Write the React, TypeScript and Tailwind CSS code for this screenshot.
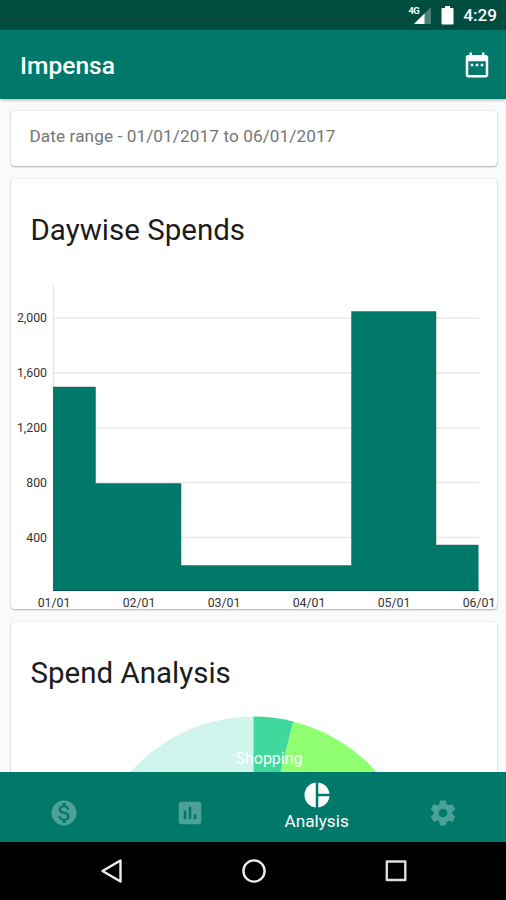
/**
 * Impensa — analysis screen
 *
 * Status bar, app bar, scrolling cards (date range, daywise chart, spend pie),
 * bottom tabs and the Android system navigation.
 */

import type { ReactNode } from "react"

type Tab = {
  id: string
  label: string
  path: string
}

const TABS: Tab[] = [
  {
    id: "spends",
    label: "Spends",
    path: "M12 2C6.48 2 2 6.48 2 12s4.48 10 10 10 10-4.48 10-10S17.52 2 12 2zm1.41 16.09V20h-2.67v-1.93c-1.71-.36-3.16-1.46-3.27-3.4h1.96c.1 1.05.82 1.87 2.65 1.87 1.96 0 2.4-.98 2.4-1.59 0-.83-.44-1.61-2.67-2.14-2.48-.6-4.18-1.62-4.18-3.67 0-1.72 1.39-2.84 3.11-3.21V4h2.67v1.95c1.86.45 2.79 1.86 2.85 3.39H14.3c-.05-1.11-.64-1.87-2.22-1.87-1.5 0-2.4.68-2.4 1.64 0 .84.65 1.39 2.67 1.91s4.18 1.39 4.18 3.91c-.01 1.83-1.38 2.83-3.12 3.16z",
  },
  {
    id: "reports",
    label: "Reports",
    path: "M19 3H5c-1.1 0-2 .9-2 2v14c0 1.1.9 2 2 2h14c1.1 0 2-.9 2-2V5c0-1.1-.9-2-2-2zM9 17H7v-7h2v7zm4 0h-2V7h2v10zm4 0h-2v-4h2v4z",
  },
  {
    id: "analysis",
    label: "Analysis",
    path: "M11 2v20c-5.07-.5-9-4.79-9-10s3.93-9.5 9-10zm2.03 0v8.99H22c-.47-4.74-4.24-8.52-8.97-8.99zm0 11.01V22c4.74-.47 8.5-4.25 8.97-8.99h-8.97z",
  },
  {
    id: "settings",
    label: "Settings",
    path: "M19.43 12.98c.04-.32.07-.64.07-.98s-.03-.66-.07-.98l2.11-1.65c.19-.15.24-.42.12-.64l-2-3.46c-.12-.22-.39-.3-.61-.22l-2.49 1c-.52-.4-1.08-.73-1.69-.98l-.38-2.65C14.46 2.18 14.25 2 14 2h-4c-.25 0-.46.18-.49.42l-.38 2.65c-.61.25-1.17.59-1.69.98l-2.49-1c-.23-.09-.49 0-.61.22l-2 3.46c-.13.22-.07.49.12.64l2.11 1.65c-.04.32-.07.65-.07.98s.03.66.07.98l-2.11 1.65c-.19.15-.24.42-.12.64l2 3.46c.12.22.39.3.61.22l2.49-1c.52.4 1.08.73 1.69.98l.38 2.65c.03.24.24.42.49.42h4c.25 0 .46-.18.49-.42l.38-2.65c.61-.25 1.17-.59 1.69-.98l2.49 1c.23.09.49 0 .61-.22l2-3.46c.12-.22.07-.49-.12-.64l-2.11-1.65zM12 15.5c-1.93 0-3.5-1.57-3.5-3.5s1.57-3.5 3.5-3.5 3.5 1.57 3.5 3.5-1.57 3.5-3.5 3.5z",
  },
]

const Y_TICKS = [
  { label: "2,000", y: 38 },
  { label: "1,600", y: 93 },
  { label: "1,200", y: 148 },
  { label: "800", y: 202.5 },
  { label: "400", y: 257.5 },
]

const X_TICKS = ["01/01", "02/01", "03/01", "04/01", "05/01", "06/01"]

function StatusBar() {
  return (
    <div className="flex h-[30px] shrink-0 items-center justify-end bg-[#004d40] pr-[9px] text-white">
      <svg width="25" height="20" viewBox="0 0 25 20" className="mr-[8px]" aria-hidden="true">
        <path d="M23 2v17H6z" fill="#fff" fillOpacity="0.3" />
        <path d="M16.5 8.5V19H6z" fill="#fff" />
        <text x="0.5" y="9" fontSize="9.5" fontWeight="700" letterSpacing="-0.8" fill="#fff">
          4G
        </text>
      </svg>
      <svg width="13" height="20" viewBox="0 0 13 20" className="mr-[9px]" aria-hidden="true">
        <path d="M4 1h5v2h2.5a1 1 0 0 1 1 1v14.5a1 1 0 0 1-1 1h-10a1 1 0 0 1-1-1V4a1 1 0 0 1 1-1H4z" fill="#fff" />
      </svg>
      <span className="mt-[2px] text-[17.2px] leading-none font-medium">4:29</span>
    </div>
  )
}

function AppBar() {
  return (
    <header className="z-10 flex h-[69px] shrink-0 items-center justify-between bg-[#00796b] pr-[14px] pl-5 text-white shadow-[0_1px_3px_rgba(0,0,0,0.3)]">
      <h1 className="mt-[3px] text-[24.6px] leading-none font-medium">Impensa</h1>
      <svg width="30" height="30" viewBox="0 0 24 24" fill="currentColor" aria-hidden="true">
        <path d="M9 11H7v2h2v-2zm4 0h-2v2h2v-2zm4 0h-2v2h2v-2zm2-7h-1V2h-2v2H8V2H6v2H5c-1.11 0-1.99.9-1.99 2L3 20c0 1.1.89 2 2 2h14c1.1 0 2-.9 2-2V6c0-1.1-.9-2-2-2zm0 16H5V9h14v11z" />
      </svg>
    </header>
  )
}

function Card({ className, children }: { className: string; children: ReactNode }) {
  return (
    <section
      className={`w-[486px] shrink-0 overflow-hidden rounded-[4px] bg-white shadow-[0_1px_2px_rgba(0,0,0,0.28),0_0_2px_rgba(0,0,0,0.12)] ${className}`}
    >
      {children}
    </section>
  )
}

function DaywiseChart() {
  return (
    <svg width="486" height="330" viewBox="11 0 486 330" className="block" aria-label="Daywise spends">
      {Y_TICKS.map((tick) => (
        <g key={tick.label}>
          <path d={`M53 ${tick.y}H479`} stroke="#e8e8e8" strokeWidth="1.5" />
          <text x="47" y={tick.y + 4} fontSize="12.3" textAnchor="end" fill="#333">
            {tick.label}
          </text>
        </g>
      ))}
      <path d="M53.5 5V311" stroke="#e3e3e3" strokeWidth="1.2" />
      <path
        d="M53 311V107H95.500V203.500H181V285.500H351.500V31.500H436V265H478.500V311z"
        fill="#00796b"
      />
      <path
        d="M53 107H95.500V203.500H181V285.500H351.500V31.500H436V265H478.500"
        fill="none"
        stroke="#3b5f58"
        strokeOpacity="0.5"
        strokeWidth="1"
      />
      <path d="M53 310.500H479" stroke="#00594e" strokeWidth="1" />
      {X_TICKS.map((label, i) => (
        <text key={label} x={54 + i * 85} y="327" fontSize="12.3" textAnchor="middle" fill="#333">
          {label}
        </text>
      ))}
    </svg>
  )
}

function SpendPie() {
  return (
    <svg width="486" height="72" viewBox="11 700 486 72" className="block" aria-label="Spend analysis">
      <path d="M253.500 880.500V716.500A164 164 0 0 0 89.500 880.500z" fill="#cff5ec" />
      <path d="M253.500 880.500L293.200 721.400A164 164 0 0 1 417.500 880.500z" fill="#90ff72" />
      <path d="M253.500 880.500V716.500A164 164 0 0 1 293.200 721.400z" fill="#40d89c" />
      <text x="269" y="763.500" fontSize="16" textAnchor="middle" fill="#fff">
        Shopping
      </text>
    </svg>
  )
}

function BottomTabs({ activeId }: { activeId: string }) {
  return (
    <nav className="grid h-[70px] shrink-0 grid-cols-4 bg-[#00796b] pl-px text-white">
      {TABS.map((tab) => {
        const active = tab.id === activeId
        return (
          <button
            key={tab.id}
            type="button"
            aria-label={tab.label}
            className={`flex flex-col items-center ${active ? "pt-2" : "pt-[26px] opacity-30"}`}
          >
            <svg width="30" height="30" viewBox="0 0 24 24" fill="currentColor" className="shrink-0" aria-hidden="true">
              <path d={tab.path} />
            </svg>
            {active && <span className="mt-[2px] text-[17.2px] leading-[18px]">{tab.label}</span>}
          </button>
        )
      })}
    </nav>
  )
}

function SystemNav() {
  return (
    <div className="flex h-[58px] shrink-0 items-center justify-center gap-[118px] bg-black pl-[2px]">
      <svg width="24" height="26" viewBox="0 0 24 26" fill="none" stroke="#eee" strokeWidth="2.4" strokeLinejoin="round" aria-hidden="true">
        <path d="M20.500 2.500v21L2.500 13z" />
      </svg>
      <svg width="24" height="26" viewBox="0 0 24 26" fill="none" stroke="#eee" strokeWidth="2.4" aria-hidden="true">
        <circle cx="12" cy="13" r="10.600" />
      </svg>
      <svg width="24" height="26" viewBox="0 0 24 26" fill="none" stroke="#ddd" strokeWidth="2.4" strokeLinejoin="round" aria-hidden="true">
        <rect x="2.800" y="3.500" width="18.500" height="18.500" />
      </svg>
    </div>
  )
}

export default function App() {
  return (
    <div className="flex h-[900px] w-[506px] flex-col overflow-hidden bg-[#fafafa] font-['Roboto',sans-serif]">
      <StatusBar />
      <AppBar />
      <main className="flex min-h-0 flex-1 flex-col items-center gap-[13px] overflow-hidden pt-3 pl-px">
        <Card className="h-[55px] px-[19px] pt-[14px]">
          <p className="text-[17.2px] leading-[22px] tracking-[0.09px] text-[#757575]">
            Date range - 01/01/2017 to 06/01/2017
          </p>
        </Card>
        <Card className="h-[430px]">
          <h2 className="h-[101px] px-5 pt-[33px] text-[29.5px] leading-[36px] text-[#1c1c1c]">
            Daywise Spends
          </h2>
          <DaywiseChart />
        </Card>
        <Card className="h-[300px]">
          <h2 className="h-[78px] px-5 pt-[33px] text-[29.5px] leading-[36px] text-[#1c1c1c]">
            Spend Analysis
          </h2>
          <SpendPie />
        </Card>
      </main>
      <BottomTabs activeId="analysis" />
      <SystemNav />
    </div>
  )
}
